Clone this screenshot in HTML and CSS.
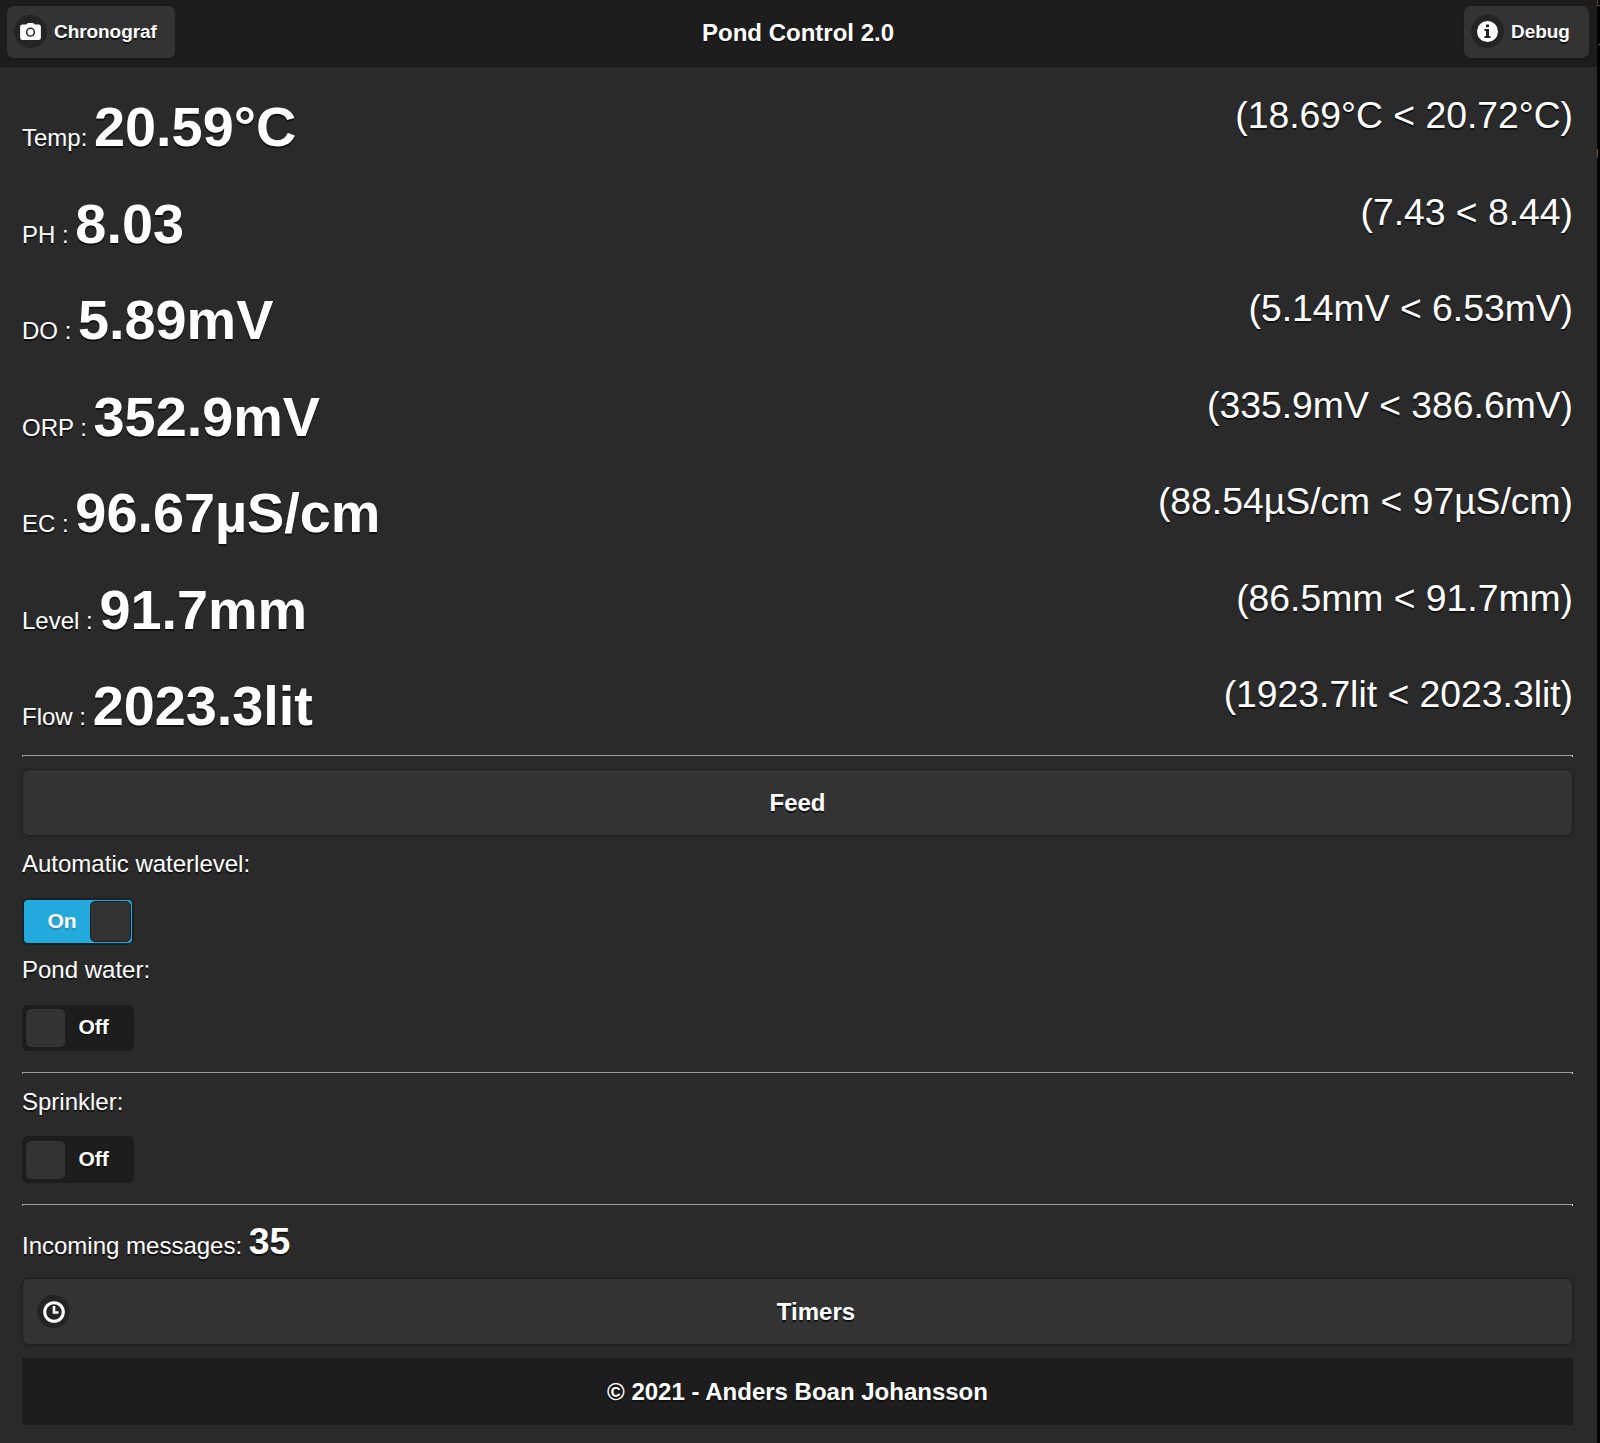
FILE: index.html
```html
<!DOCTYPE html>
<html lang="en">
<head>
<meta charset="utf-8">
<title>Pond Control 2.0</title>
<link rel="stylesheet" href="styles.css">
</head>
<body>
<div class="page">
  <header class="header">
    <a class="btn btn-small">
      <span class="disc"><svg width="21" height="17" viewBox="0 0 22 18"><path fill="#fff" fill-rule="evenodd" d="M2.500 1.500H6.500L7.500 .5Q8 0 8.700 0H13.300Q14 0 14.500 .5L15.500 1.500H19.500Q22 1.500 22 4V15.500Q22 18 19.500 18H2.500Q0 18 0 15.500V4Q0 1.500 2.500 1.500ZM11 4.800A4.900 4.900 0 1 0 11 14.600A4.900 4.900 0 1 0 11 4.800ZM11 6.400A3.300 3.300 0 1 1 11 13A3.300 3.300 0 1 1 11 6.400Z"/></svg></span>
      <span class="caption">Chronograf</span>
    </a>
    <h1 class="title">Pond Control 2.0</h1>
    <a class="btn btn-small btn-debug">
      <span class="disc"><svg width="21" height="21" viewBox="0 0 21 21"><circle cx="10.500" cy="10.500" r="10.500" fill="#fff"/><path fill="#222" d="M9 3.500H12V6.200H9ZM7.500 8H12V15H13.500V17H7.500V15H9V10H7.500Z"/></svg></span>
      <span class="caption">Debug</span>
    </a>
  </header>
  <main class="content">
    <div class="reading"><div class="now">Temp: <b>20.59°C</b></div><div class="range">(18.69°C &lt; 20.72°C)</div></div>
    <div class="reading"><div class="now">PH : <b>8.03</b></div><div class="range">(7.43 &lt; 8.44)</div></div>
    <div class="reading"><div class="now">DO : <b>5.89mV</b></div><div class="range">(5.14mV &lt; 6.53mV)</div></div>
    <div class="reading"><div class="now">ORP : <b>352.9mV</b></div><div class="range">(335.9mV &lt; 386.6mV)</div></div>
    <div class="reading"><div class="now">EC : <b>96.67µS/cm</b></div><div class="range">(88.54µS/cm &lt; 97µS/cm)</div></div>
    <div class="reading"><div class="now">Level : <b>91.7mm</b></div><div class="range">(86.5mm &lt; 91.7mm)</div></div>
    <div class="reading"><div class="now">Flow : <b>2023.3lit</b></div><div class="range">(1923.7lit &lt; 2023.3lit)</div></div>
    <hr class="rule">
    <a class="btn btn-wide btn-feed">Feed</a>
    <div class="label">Automatic waterlevel:</div>
    <div class="switch switch-on"><span class="state">On</span><span class="knob"></span></div>
    <div class="label label-pond">Pond water:</div>
    <div class="switch"><span class="knob"></span><span class="state">Off</span></div>
    <hr class="rule rule-after">
    <div class="label label-sprinkler">Sprinkler:</div>
    <div class="switch switch-sprinkler"><span class="knob"></span><span class="state">Off</span></div>
    <hr class="rule rule-after">
    <div class="messages">Incoming messages: <b>35</b></div>
    <a class="btn btn-wide btn-timers">
      <span class="disc"><svg width="22" height="22" viewBox="0 0 22 22"><circle cx="11" cy="11" r="9.300" fill="none" stroke="#fff" stroke-width="3"/><path d="M11 5V11.500H15.500" fill="none" stroke="#fff" stroke-width="2.600"/></svg></span>
      <span class="btn-text">Timers</span>
    </a>
    <footer class="footer">© 2021 - Anders Boan Johansson</footer>
  </main>
</div>
</body>
</html>
```

FILE: styles.css
```css
* { box-sizing: border-box; }
body {
  margin: 0;
  background:
    linear-gradient(#6b4a30, #6b4a30) 1597px 5px / 3px 1px no-repeat,
    linear-gradient(#5a4030, #5a4030) 1597px 0 / 1px 5px no-repeat,
    linear-gradient(#555, #555) 1598px 44px / 2px 1px no-repeat,
    linear-gradient(#7a4a2a, #7a4a2a) 1597px 149px / 1px 9px no-repeat,
    #000;
  color: #fff;
  font: 24px/30px "Liberation Sans", Arial, sans-serif;
  text-shadow: 0 1.5px 0 #111;
}
.page {
  width: 1597px;
  height: 1443px;
  background: #2a2a2a;
}
.header {
  display: grid;
  grid-template-columns: 1fr auto 1fr;
  align-items: start;
  height: 67px;
  padding: 6px 8px 0 7px;
  background: #1d1d1d;
  border-bottom: 1px solid #1b1b1b;
}
.title {
  margin: 0;
  padding-top: 12px;
  font-size: 24px;
  line-height: 30px;
}
.btn {
  display: flex;
  align-items: center;
  background: #333;
  border-radius: 7px;
  font-weight: bold;
}
.btn-small {
  width: 168px;
  height: 52px;
  padding: 0 0 2px 7px;
  gap: 7px;
  font-size: 18.900px;
  box-shadow: 0 1.5px 4px rgba(0, 0, 0, .15);
}
.caption { padding-top: 2px; }
.btn-debug {
  justify-self: end;
  width: 125px;
}
.disc {
  display: flex;
  align-items: center;
  justify-content: center;
  flex: none;
  width: 33px;
  height: 33px;
  border-radius: 50%;
  background: #242424;
}
.content { padding: 27px 24px 0 22px; }
.reading {
  display: flex;
  justify-content: space-between;
  height: 96.500px;
}
.now { line-height: 65px; }
.now b { font-size: 55.800px; }
.range {
  font-size: 37.300px;
  line-height: 42.500px;
}
.rule {
  height: 2px;
  margin: -14.500px 0 12px;
  border: 1px solid #9a9a9a;
  border-right-color: #eee;
  border-bottom: 0;
}
.btn-wide {
  height: 67px;
  border: 1px solid #1f1f1f;
  box-shadow: 0 1.5px 4px rgba(0, 0, 0, .15);
}
.btn-feed { justify-content: center; }
.label { margin: 13px 0 19px; }
.label-pond { margin: 10px 0 20px; }
.switch {
  display: flex;
  align-items: center;
  width: 112px;
  height: 46px;
  padding: 0 4px;
  background: #1d1d1d;
  border-radius: 6px;
  font-size: 21px;
  font-weight: bold;
}
.state { padding: 0 0 2px 13.500px; }
.knob {
  width: 39px;
  height: 38px;
  background: #333;
  border-radius: 5px;
}
.switch-on {
  justify-content: space-between;
  height: 47px;
  padding: 0 1px 0 0;
  background: #22aadd;
  border: 2px solid #1b2226;
  text-shadow: 0 1.5px 0 #3388aa;
}
.switch-on .state { padding-left: 23.500px; }
.switch-on .knob {
  width: 41px;
  height: 41px;
  border: 1px solid #1f1f1f;
}
.rule-after { margin: 21px 0 12px; }
.label-sprinkler { margin: 13px 0 19px; }
.switch-sprinkler { height: 47px; }
.messages {
  height: 46px;
  line-height: 46px;
}
.messages b { font-size: 37.300px; }
.btn-timers {
  margin-top: 14px;
  padding-left: 14px;
}
.btn-text {
  flex: 1;
  text-align: center;
  padding-right: 10px;
}
.footer {
  height: 67px;
  margin-top: 13px;
  background: #1d1d1d;
  font-weight: bold;
  line-height: 68px;
  text-align: center;
}
```
